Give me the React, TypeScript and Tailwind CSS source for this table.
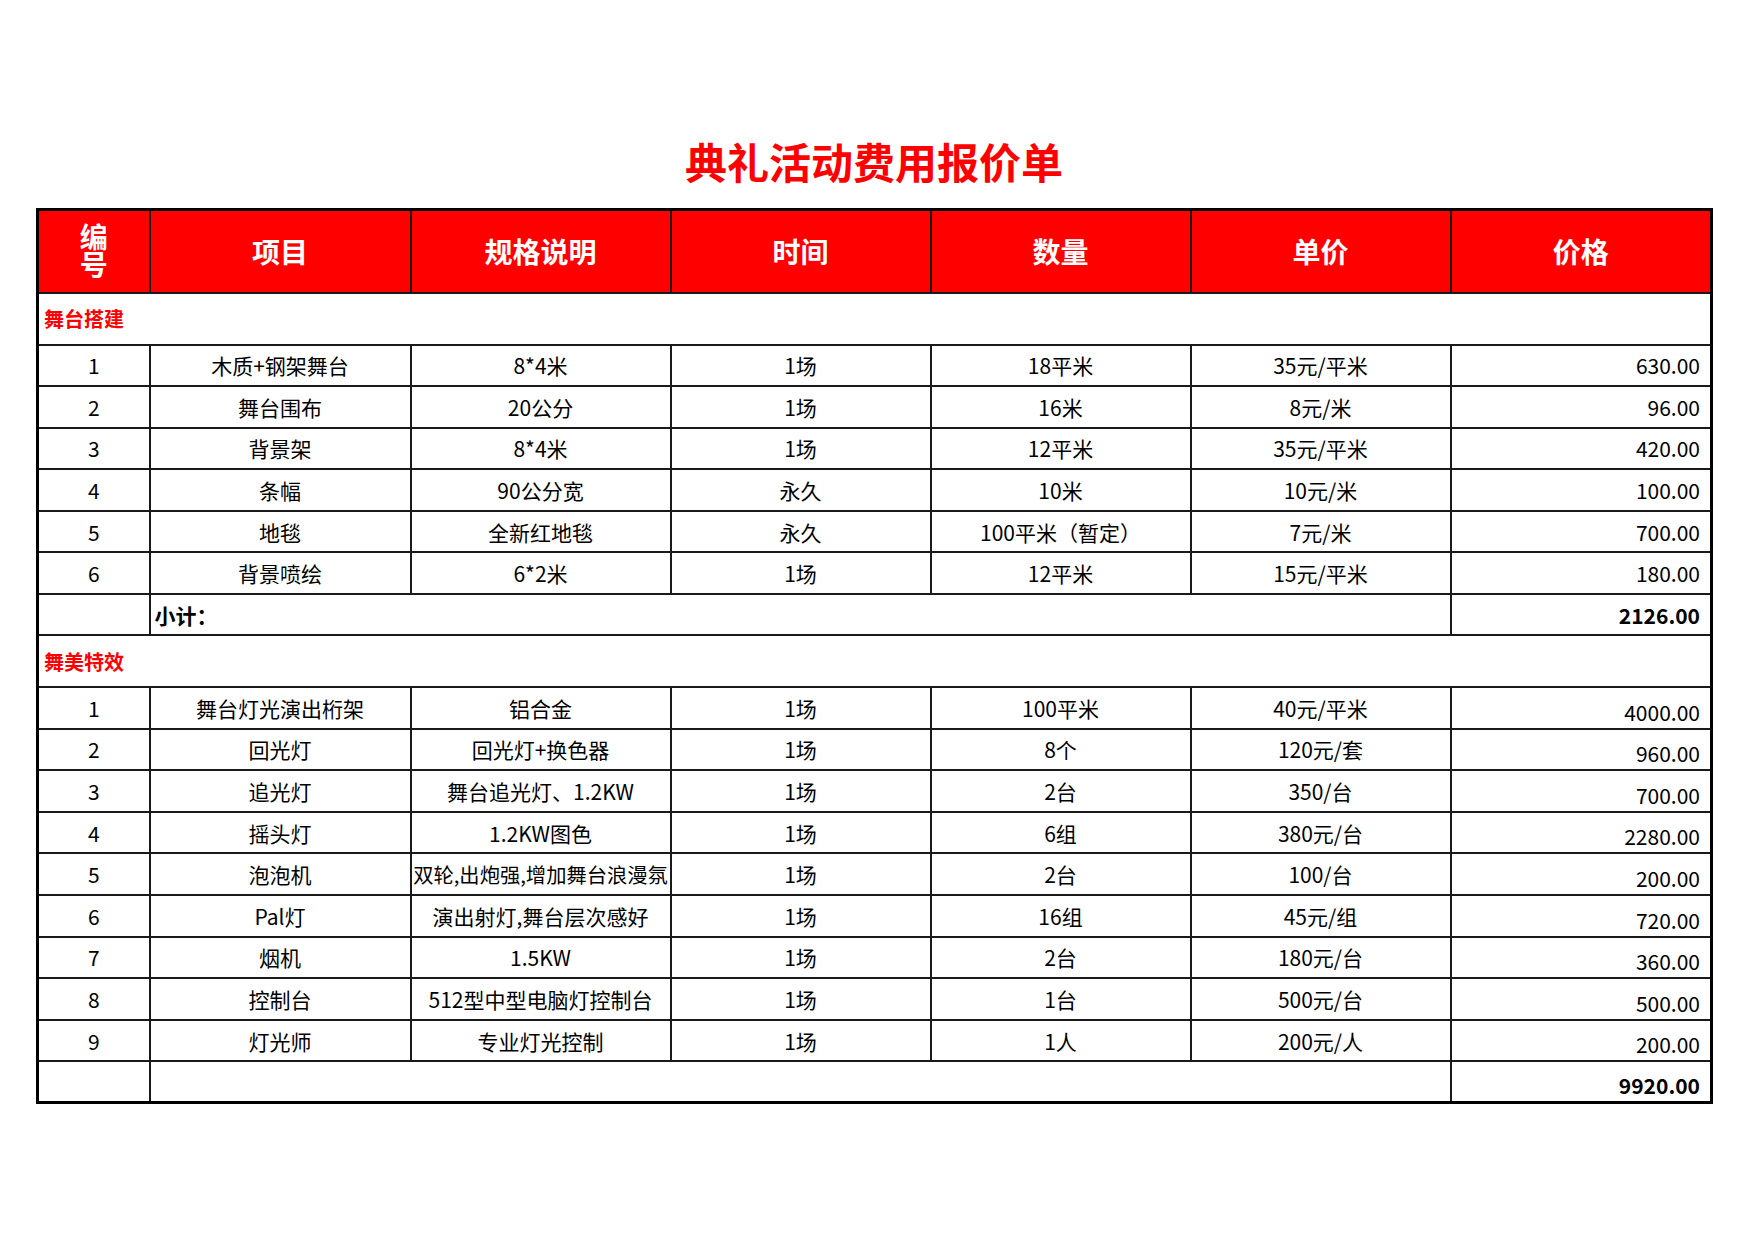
type Item = [string, string, string, string, string, string, string];

const stage: Item[] = [
  ['1', '木质+钢架舞台', '8*4米', '1场', '18平米', '35元/平米', '630.00'],
  ['2', '舞台围布', '20公分', '1场', '16米', '8元/米', '96.00'],
  ['3', '背景架', '8*4米', '1场', '12平米', '35元/平米', '420.00'],
  ['4', '条幅', '90公分宽', '永久', '10米', '10元/米', '100.00'],
  ['5', '地毯', '全新红地毯', '永久', '100平米（暂定）', '7元/米', '700.00'],
  ['6', '背景喷绘', '6*2米', '1场', '12平米', '15元/平米', '180.00'],
];

const effects: Item[] = [
  ['1', '舞台灯光演出桁架', '铝合金', '1场', '100平米', '40元/平米', '4000.00'],
  ['2', '回光灯', '回光灯+换色器', '1场', '8个', '120元/套', '960.00'],
  ['3', '追光灯', '舞台追光灯、1.2KW', '1场', '2台', '350/台', '700.00'],
  ['4', '摇头灯', '1.2KW图色', '1场', '6组', '380元/台', '2280.00'],
  ['5', '泡泡机', '双轮,出炮强,增加舞台浪漫氛', '1场', '2台', '100/台', '200.00'],
  ['6', 'Pal灯', '演出射灯,舞台层次感好', '1场', '16组', '45元/组', '720.00'],
  ['7', '烟机', '1.5KW', '1场', '2台', '180元/台', '360.00'],
  ['8', '控制台', '512型中型电脑灯控制台', '1场', '1台', '500元/台', '500.00'],
  ['9', '灯光师', '专业灯光控制', '1场', '1人', '200元/人', '200.00'],
];

const cell = 'border-2 border-[#1a1a1a] p-0 text-center align-middle whitespace-nowrap overflow-hidden';

function Rows({ items, low }: { items: Item[]; low?: boolean }) {
  return (
    <>
      {items.map((r) => (
        <tr key={r[0]} className="h-[41.6px]">
          {r.slice(0, 6).map((v, i) => (
            <td key={i} className={v.length > 12 ? cell + ' text-[20.3px]' : cell}>
              {v}
            </td>
          ))}
          <td
            className={
              low
                ? 'border-2 border-[#1a1a1a] p-0 pr-[10px] pb-[3px] text-right align-bottom'
                : 'border-2 border-[#1a1a1a] p-0 pr-[10px] text-right align-middle'
            }
          >
            {r[6]}
          </td>
        </tr>
      ))}
    </>
  );
}

function Section({ title }: { title: string }) {
  return (
    <tr className="h-[52px]">
      <td colSpan={7} className="border-2 border-[#1a1a1a] p-0 pl-[5px] pt-[1px] text-left align-middle text-[20px] font-bold text-[#ff0000]">
        {title}
      </td>
    </tr>
  );
}

export default function App() {
  const heads = ['项目', '规格说明', '时间', '数量', '单价', '价格'];
  return (
    <div className="min-h-[1240px] bg-white px-[36px] pt-[137px] font-['Noto_Sans_CJK_SC',sans-serif] text-black">
      <h1 className="w-[1676px] text-center text-[42px] leading-[48px] font-bold text-[#ff0000]">典礼活动费用报价单</h1>
      <table className="mt-[23px] w-[1674px] table-fixed border-collapse border-[3px] border-black text-[21px] leading-[26px]">
        <colgroup>
          <col className="w-[112px]" />
          <col className="w-[261px]" />
          <col className="w-[260px]" />
          <col className="w-[260px]" />
          <col className="w-[260px]" />
          <col className="w-[260px]" />
          <col className="w-[261px]" />
        </colgroup>
        <thead>
          <tr className="h-[83px] bg-[#ff0000] text-[28px] font-bold text-white">
            <th className="border-2 border-[#1a1a1a] p-0 text-center align-middle">
              <span className="inline-block leading-[30px] [writing-mode:vertical-rl]">编号</span>
            </th>
            {heads.map((h) => (
              <th key={h} className="border-2 border-[#1a1a1a] p-0 text-center align-middle">
                {h}
              </th>
            ))}
          </tr>
        </thead>
        <tbody>
          <Section title="舞台搭建" />
          <Rows items={stage} />
          <tr className="h-[41px]">
            <td className={cell}></td>
            <td colSpan={5} className="border-2 border-[#1a1a1a] p-0 pl-[4px] text-left align-middle font-bold">
              小计：
            </td>
            <td className="border-2 border-[#1a1a1a] p-0 pr-[10px] text-right align-middle font-bold">2126.00</td>
          </tr>
          <Section title="舞美特效" />
          <Rows items={effects} low />
          <tr className="h-[41px]">
            <td className={cell}></td>
            <td colSpan={5} className="border-2 border-[#1a1a1a] p-0"></td>
            <td className="border-2 border-[#1a1a1a] p-0 pr-[10px] pb-[3px] text-right align-bottom font-bold">9920.00</td>
          </tr>
        </tbody>
      </table>
    </div>
  );
}
